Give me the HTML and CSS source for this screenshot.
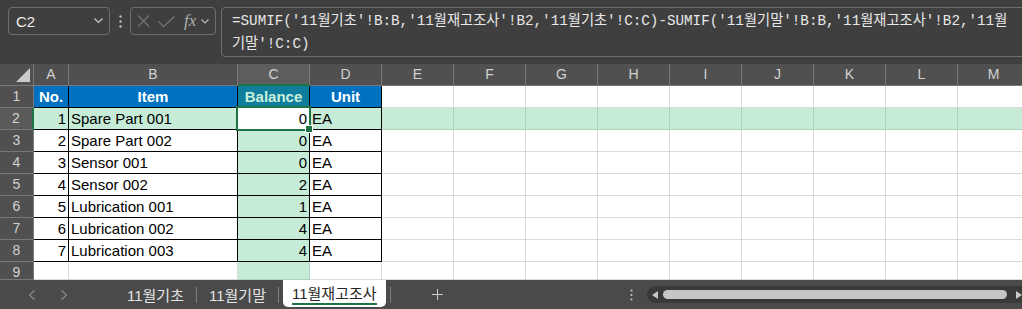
FILE: index.html
```html
<!DOCTYPE html>
<html lang="ko">
<head>
    <meta charset="UTF-8">
    <meta name="viewport" content="width=device-width, initial-scale=1.0">
    <title>11월재고조사</title>
    <link rel="stylesheet" href="styles.css">
</head>
<body>
    <div class="formula-bar">
        <div class="name-box">
            <span>C2</span>
            <svg width="9" height="6" viewBox="0 0 9 6"><path d="M.5.5l4 4 4-4" fill="none" stroke="#cfcfcf" stroke-width="1.1"/></svg>
        </div>
        <div class="bar-dots">
            <svg width="3" height="13" viewBox="0 0 3 13"><circle cx="1.5" cy="1.5" r="1.2" fill="#bdbdbd"/><circle cx="1.5" cy="6.5" r="1.2" fill="#bdbdbd"/><circle cx="1.5" cy="11.5" r="1.2" fill="#bdbdbd"/></svg>
        </div>
        <div class="fn-box">
            <svg width="13" height="12" viewBox="0 0 13 12"><path d="M1 .5l11 11M12 .5l-11 11" stroke="#747474" stroke-width="1.2"/></svg>
            <svg class="check" width="17" height="11" viewBox="0 0 17 11"><path d="M.5 5.5l5 5 11-10" fill="none" stroke="#747474" stroke-width="1.2"/></svg>
            <span class="fx">fx</span>
            <svg width="8" height="5" viewBox="0 0 8 5"><path d="M.5.5l3.5 3.5 3.5-3.5" fill="none" stroke="#bbbbbb" stroke-width="1.1"/></svg>
        </div>
        <div class="formula">=SUMIF('11월기초'!B:B,'11월재고조사'!B2,'11월기초'!C:C)-SUMIF('11월기말'!B:B,'11월재고조사'!B2,'11월<br>기말'!C:C)</div>
    </div>

    <div class="sheet">
        <!-- column headers -->
        <div class="cell hd corner"><span class="tri"></span></div>
        <div class="cell hd">A</div>
        <div class="cell hd">B</div>
        <div class="cell hd cur-col">C</div>
        <div class="cell hd">D</div>
        <div class="cell hd">E</div>
        <div class="cell hd">F</div>
        <div class="cell hd">G</div>
        <div class="cell hd">H</div>
        <div class="cell hd">I</div>
        <div class="cell hd">J</div>
        <div class="cell hd">K</div>
        <div class="cell hd">L</div>
        <div class="cell hd">M</div>

        <!-- row 1 -->
        <div class="cell hd">1</div>
        <div class="cell th tb">No.</div>
        <div class="cell th tb">Item</div>
        <div class="cell th tb th-focus">Balance</div>
        <div class="cell th tb">Unit</div>
        <div class="cell"></div><div class="cell"></div><div class="cell"></div><div class="cell"></div><div class="cell"></div><div class="cell"></div><div class="cell"></div><div class="cell"></div><div class="cell"></div>

        <!-- row 2 (active row) -->
        <div class="cell hd cur-row">2</div>
        <div class="cell fc tb num">1</div>
        <div class="cell fc tb">Spare Part 001</div>
        <div class="cell tb num active">0</div>
        <div class="cell fc tb">EA</div>
        <div class="cell fc"></div><div class="cell fc"></div><div class="cell fc"></div><div class="cell fc"></div><div class="cell fc"></div><div class="cell fc"></div><div class="cell fc"></div><div class="cell fc"></div><div class="cell fc"></div>

        <!-- row 3 -->
        <div class="cell hd">3</div>
        <div class="cell tb num">2</div>
        <div class="cell tb">Spare Part 002</div>
        <div class="cell fc tb num">0</div>
        <div class="cell tb">EA</div>
        <div class="cell"></div><div class="cell"></div><div class="cell"></div><div class="cell"></div><div class="cell"></div><div class="cell"></div><div class="cell"></div><div class="cell"></div><div class="cell"></div>

        <!-- row 4 -->
        <div class="cell hd">4</div>
        <div class="cell tb num">3</div>
        <div class="cell tb">Sensor 001</div>
        <div class="cell fc tb num">0</div>
        <div class="cell tb">EA</div>
        <div class="cell"></div><div class="cell"></div><div class="cell"></div><div class="cell"></div><div class="cell"></div><div class="cell"></div><div class="cell"></div><div class="cell"></div><div class="cell"></div>

        <!-- row 5 -->
        <div class="cell hd">5</div>
        <div class="cell tb num">4</div>
        <div class="cell tb">Sensor 002</div>
        <div class="cell fc tb num">2</div>
        <div class="cell tb">EA</div>
        <div class="cell"></div><div class="cell"></div><div class="cell"></div><div class="cell"></div><div class="cell"></div><div class="cell"></div><div class="cell"></div><div class="cell"></div><div class="cell"></div>

        <!-- row 6 -->
        <div class="cell hd">6</div>
        <div class="cell tb num">5</div>
        <div class="cell tb">Lubrication 001</div>
        <div class="cell fc tb num">1</div>
        <div class="cell tb">EA</div>
        <div class="cell"></div><div class="cell"></div><div class="cell"></div><div class="cell"></div><div class="cell"></div><div class="cell"></div><div class="cell"></div><div class="cell"></div><div class="cell"></div>

        <!-- row 7 -->
        <div class="cell hd">7</div>
        <div class="cell tb num">6</div>
        <div class="cell tb">Lubrication 002</div>
        <div class="cell fc tb num">4</div>
        <div class="cell tb">EA</div>
        <div class="cell"></div><div class="cell"></div><div class="cell"></div><div class="cell"></div><div class="cell"></div><div class="cell"></div><div class="cell"></div><div class="cell"></div><div class="cell"></div>

        <!-- row 8 -->
        <div class="cell hd">8</div>
        <div class="cell tb num">7</div>
        <div class="cell tb">Lubrication 003</div>
        <div class="cell fc tb num">4</div>
        <div class="cell tb">EA</div>
        <div class="cell"></div><div class="cell"></div><div class="cell"></div><div class="cell"></div><div class="cell"></div><div class="cell"></div><div class="cell"></div><div class="cell"></div><div class="cell"></div>

        <!-- row 9 -->
        <div class="cell hd">9</div>
        <div class="cell"></div>
        <div class="cell"></div>
        <div class="cell fc"></div>
        <div class="cell"></div>
        <div class="cell"></div><div class="cell"></div><div class="cell"></div><div class="cell"></div><div class="cell"></div><div class="cell"></div><div class="cell"></div><div class="cell"></div><div class="cell"></div>
    </div>

    <div class="tabbar">
        <div class="nav">
            <svg width="6" height="10" viewBox="0 0 6 10"><path d="M5.5.5l-5 4.5 5 4.5" fill="none" stroke="#8d8d8d" stroke-width="1.1"/></svg>
            <svg width="6" height="10" viewBox="0 0 6 10"><path d="M.5.5l5 4.5-5 4.5" fill="none" stroke="#8d8d8d" stroke-width="1.1"/></svg>
        </div>
        <div class="tab">11월기초</div>
        <div class="tab-sep"></div>
        <div class="tab">11월기말</div>
        <div class="tab-sep"></div>
        <div class="tab on"><span>11월재고조사</span></div>
        <div class="tab-sep"></div>
        <div class="tab-add">
            <svg width="11" height="11" viewBox="0 0 11 11"><path d="M5.5 0v11M0 5.5h11" stroke="#c8c8c8" stroke-width="1"/></svg>
        </div>
        <div class="more">
            <svg width="3" height="12" viewBox="0 0 3 12"><circle cx="1.5" cy="1.5" r="1.1" fill="#c8c8c8"/><circle cx="1.5" cy="6" r="1.1" fill="#c8c8c8"/><circle cx="1.5" cy="10.5" r="1.1" fill="#c8c8c8"/></svg>
        </div>
        <div class="hscroll">
            <svg width="6" height="8" viewBox="0 0 6 8"><path d="M6 0v8L0 4z" fill="#c8c8c8"/></svg>
            <div class="thumb"></div>
            <svg width="6" height="8" viewBox="0 0 6 8"><path d="M0 0v8l6-4z" fill="#c8c8c8"/></svg>
        </div>
    </div>
</body>
</html>
```

FILE: styles.css
```css
* {
    box-sizing: border-box;
}
body {
    margin: 0;
    width: 1022px;
    height: 309px;
    overflow: hidden;
    background-color: #3f3f3f;
    font-family: "Liberation Sans", "Noto Sans CJK KR", sans-serif;
}

/* formula bar */
.formula-bar {
    display: flex;
    align-items: flex-start;
    height: 64px;
    padding: 7px 0 0 8px;
    background-color: #3f3f3f;
}
.formula-bar > * {
    flex: none;
}
.name-box {
    display: flex;
    align-items: center;
    justify-content: space-between;
    width: 102px;
    height: 28px;
    padding: 0 6px 0 7px;
    border: 1px solid #6e6e6e;
    border-radius: 4px;
    color: #ececec;
    font-size: 15px;
}
.bar-dots {
    display: flex;
    align-items: center;
    justify-content: center;
    width: 20px;
    height: 28px;
}
.fn-box {
    display: flex;
    align-items: center;
    width: 86px;
    height: 28px;
    padding-left: 6px;
    border: 1px solid #6e6e6e;
    border-radius: 4px;
}
.fn-box .check {
    margin-left: 8px;
}
.fx {
    margin: 0 5px 0 9px;
    font-family: "Liberation Serif", serif;
    font-style: italic;
    font-size: 17px;
    color: #b0b0b0;
}
.formula {
    width: 820px;
    height: 50px;
    margin-left: 5px;
    padding: 2px 0 0 10px;
    border: 1px solid #6e6e6e;
    border-radius: 4px;
    font-family: "Liberation Mono", "Noto Sans CJK KR", monospace;
    font-size: 14.25px;
    line-height: 23px;
    color: #e8e8e8;
    white-space: nowrap;
}

/* grid */
.sheet {
    display: grid;
    grid-template-columns: 34px 35px 169px repeat(11, 72px);
    grid-template-rows: repeat(9, 22px) 18px;
    width: 1022px;
    overflow: hidden;
    background-color: #fff;
}
.cell {
    padding: 0 2px;
    border-right: 1px solid #d9d9d9;
    border-bottom: 1px solid #d9d9d9;
    background-color: #fff;
    color: #000;
    font-size: 15px;
    line-height: 21px;
    white-space: nowrap;
    overflow: hidden;
}
.hd {
    background-color: #505050;
    border-color: #787878;
    color: #d2d2d2;
    font-size: 14px;
    text-align: center;
}
.hd.cur-col {
    background-color: #5e5e5e;
    border-bottom: 2px solid #1f7244;
}
.hd.cur-row {
    background-color: #5a5a5a;
    border-right: 2px solid #1f7244;
}
.corner {
    display: flex;
    justify-content: flex-end;
    align-items: flex-end;
    padding: 0 3px 3px 0;
}
.tri {
    width: 0;
    height: 0;
    border-left: 14px solid transparent;
    border-bottom: 14px solid #cacaca;
}
.th {
    background-color: #0070c0;
    color: #fff;
    font-weight: bold;
    text-align: center;
}
.th.th-focus {
    background-color: #0f7e9c;
    color: #c9f0de;
}
.fc {
    background-color: #c6ecd8;
    border-color: #a9d5bd;
}
.tb {
    border-color: #000;
}
.num {
    text-align: right;
}
.active {
    position: relative;
    overflow: visible;
    background-color: #fff;
}
.active::after {
    content: "";
    position: absolute;
    top: -2px;
    left: -2px;
    right: -2px;
    bottom: -2px;
    border: 2px solid #1f7244;
    z-index: 2;
}
.active::before {
    content: "";
    position: absolute;
    right: -3px;
    bottom: -3px;
    width: 6px;
    height: 6px;
    background-color: #1f7244;
    outline: 1px solid #fff;
    z-index: 3;
}

/* sheet tabs */
.tabbar {
    display: flex;
    align-items: stretch;
    height: 29px;
    background-color: #4a4a4a;
    color: #e4e4e4;
    font-size: 15px;
}
.tabbar > * {
    flex: none;
}
.nav {
    display: flex;
    align-items: center;
    gap: 26px;
    width: 115px;
    padding-left: 29px;
}
.tab {
    display: flex;
    align-items: center;
    padding: 0 12px;
}
.tab-sep {
    align-self: center;
    width: 1px;
    height: 16px;
    background-color: #7e7e7e;
}
.tab.on {
    align-self: flex-start;
    align-items: flex-start;
    height: 27px;
    margin: 0 4px;
    padding: 5px 9px 0;
    background-color: #fff;
    color: #262626;
    border-radius: 0 0 5px 5px;
}
.tab.on span {
    line-height: 18px;
    border-bottom: 2px solid #1f7244;
}
.tab-add {
    display: flex;
    align-items: center;
    margin-left: 41px;
}
.more {
    display: flex;
    align-items: center;
    margin-left: 187px;
}
.hscroll {
    display: flex;
    align-items: center;
    align-self: center;
    gap: 5px;
    width: 390px;
    height: 17px;
    margin-left: 14px;
    padding-left: 5px;
    background-color: #393939;
    border-radius: 9px;
}
.thumb {
    width: 344px;
    height: 9px;
    margin-right: 4px;
    background-color: #c6c6c6;
    border-radius: 5px;
}
```
